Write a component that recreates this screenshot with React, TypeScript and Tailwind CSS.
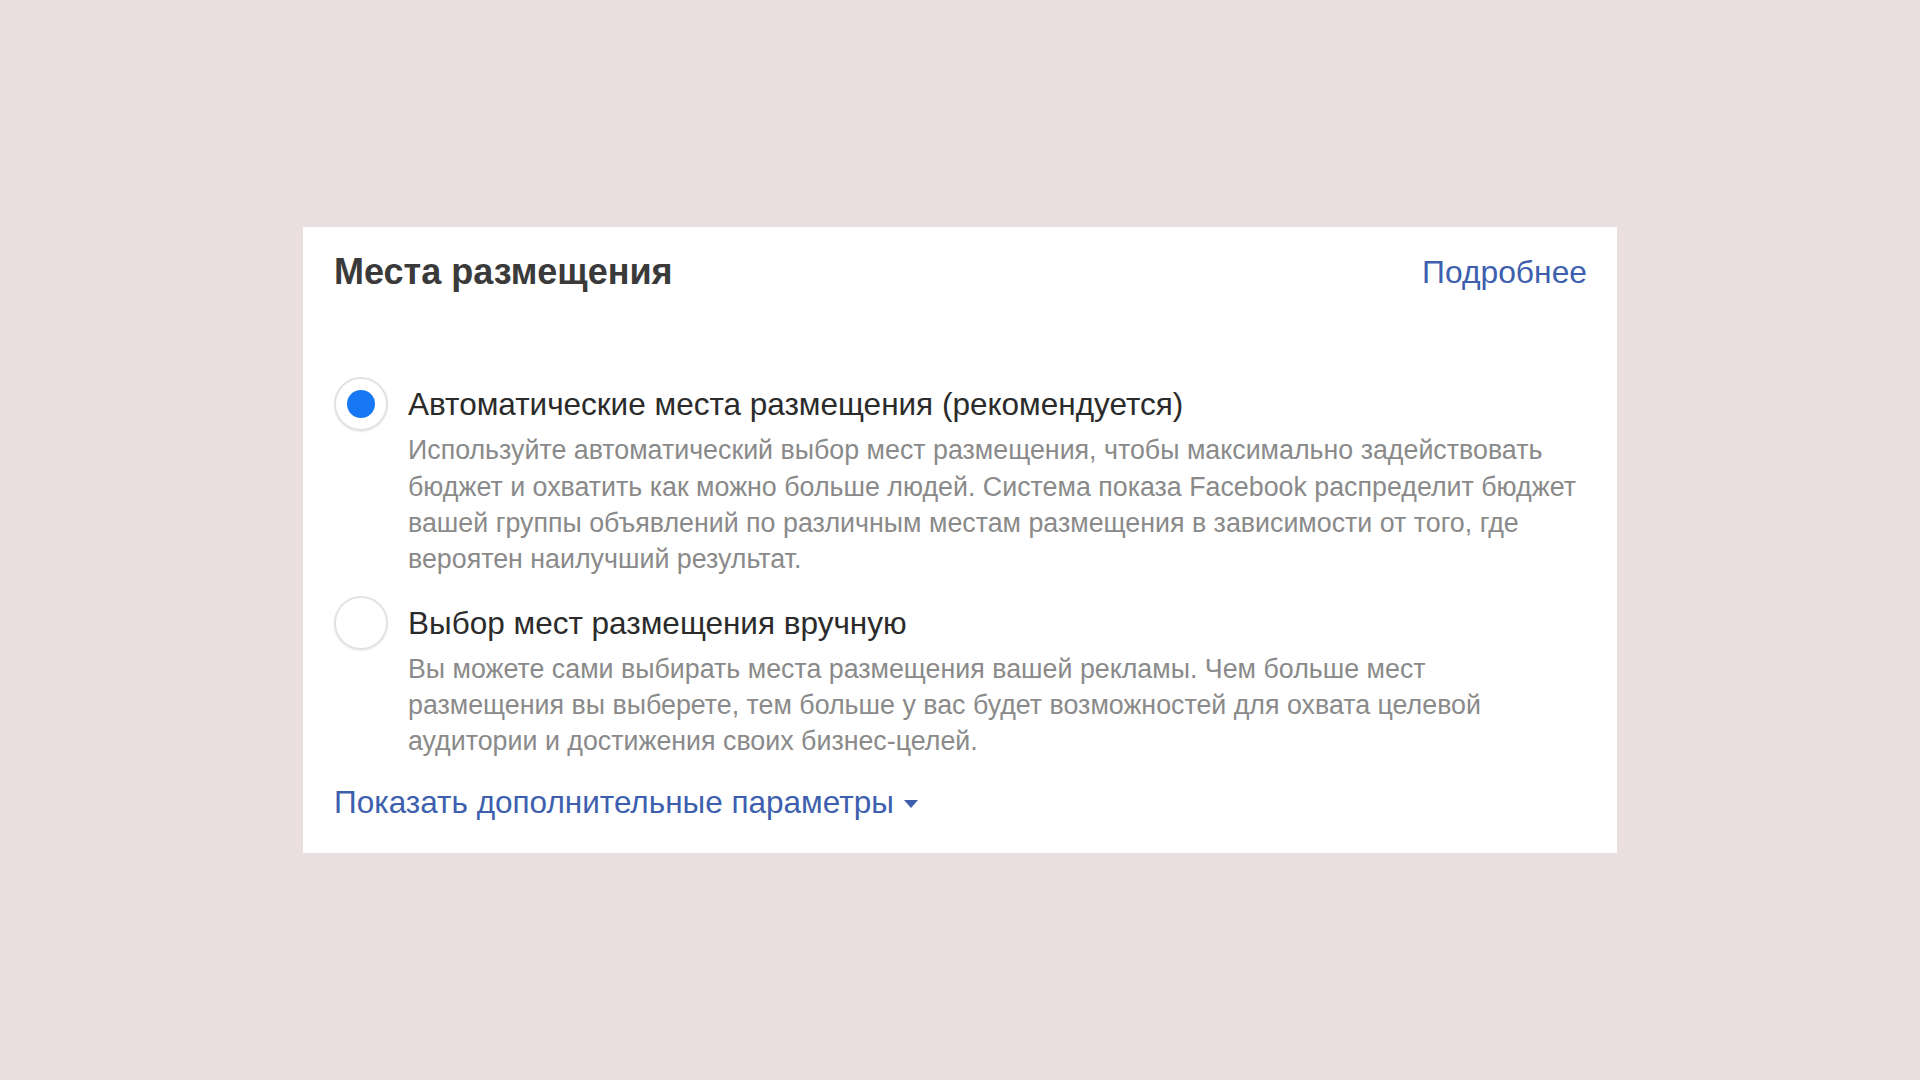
import { useState } from 'react';

type Option = {
  id: string;
  label: string;
  description: string;
};

const options: Option[] = [
  {
    id: 'auto',
    label: 'Автоматические места размещения (рекомендуется)',
    description:
      'Используйте автоматический выбор мест размещения, чтобы максимально задействовать бюджет и охватить как можно больше людей. Система показа Facebook распределит бюджет вашей группы объявлений по различным местам размещения в зависимости от того, где вероятен наилучший результат.',
  },
  {
    id: 'manual',
    label: 'Выбор мест размещения вручную',
    description:
      'Вы можете сами выбирать места размещения вашей рекламы. Чем больше мест размещения вы выберете, тем больше у вас будет возможностей для охвата целевой аудитории и достижения своих бизнес-целей.',
  },
];

function Radio({ checked }: { checked: boolean }) {
  return (
    <span className="flex h-[54px] w-[54px] shrink-0 items-center justify-center rounded-full border-2 border-[#e2e2e2] bg-white shadow-[0_1px_2px_rgba(0,0,0,0.08)]">
      {checked && <span className="h-[28px] w-[28px] rounded-full bg-[#1877f2]" />}
    </span>
  );
}

export default function App() {
  const [selected, setSelected] = useState('auto');

  return (
    <div className="flex min-h-screen items-center justify-center bg-[#e8dfde] font-['Liberation_Sans',Arial,sans-serif]">
      <div className="flex w-[1314px] flex-col bg-white pb-[31px] pl-[31px] pr-[30px] pt-[25px]">
        <div className="flex items-center justify-between">
          <h2 className="text-[36px] font-bold leading-[40px] text-[#3a3a3a]">
            Места размещения
          </h2>
          <a className="cursor-pointer text-[31.8px] leading-[40px] text-[#3d5fad]">Подробнее</a>
        </div>

        <div className="mt-[85px] flex flex-col gap-[18px]">
          {options.map((option) => (
            <div
              key={option.id}
              className="flex cursor-pointer gap-[20px]"
              onClick={() => setSelected(option.id)}
            >
              <Radio checked={selected === option.id} />
              <div className="flex flex-col">
                <div className="text-[31.5px] leading-[54px] text-[#2b2b2b]">{option.label}</div>
                <p className="mt-[1px] text-[26.8px] leading-[36.3px] text-[#8a8a8a]">
                  {option.description}
                </p>
              </div>
            </div>
          ))}
        </div>

        <a className="mt-[22px] flex cursor-pointer items-center gap-[10px] text-[31.5px] leading-[40px] text-[#3d5fad]">
          Показать дополнительные параметры
          <svg width="14" height="8" viewBox="0 0 14 8" className="mt-[4px]">
            <path d="M0 0h14L7 8z" fill="#3d5fad" />
          </svg>
        </a>
      </div>
    </div>
  );
}
